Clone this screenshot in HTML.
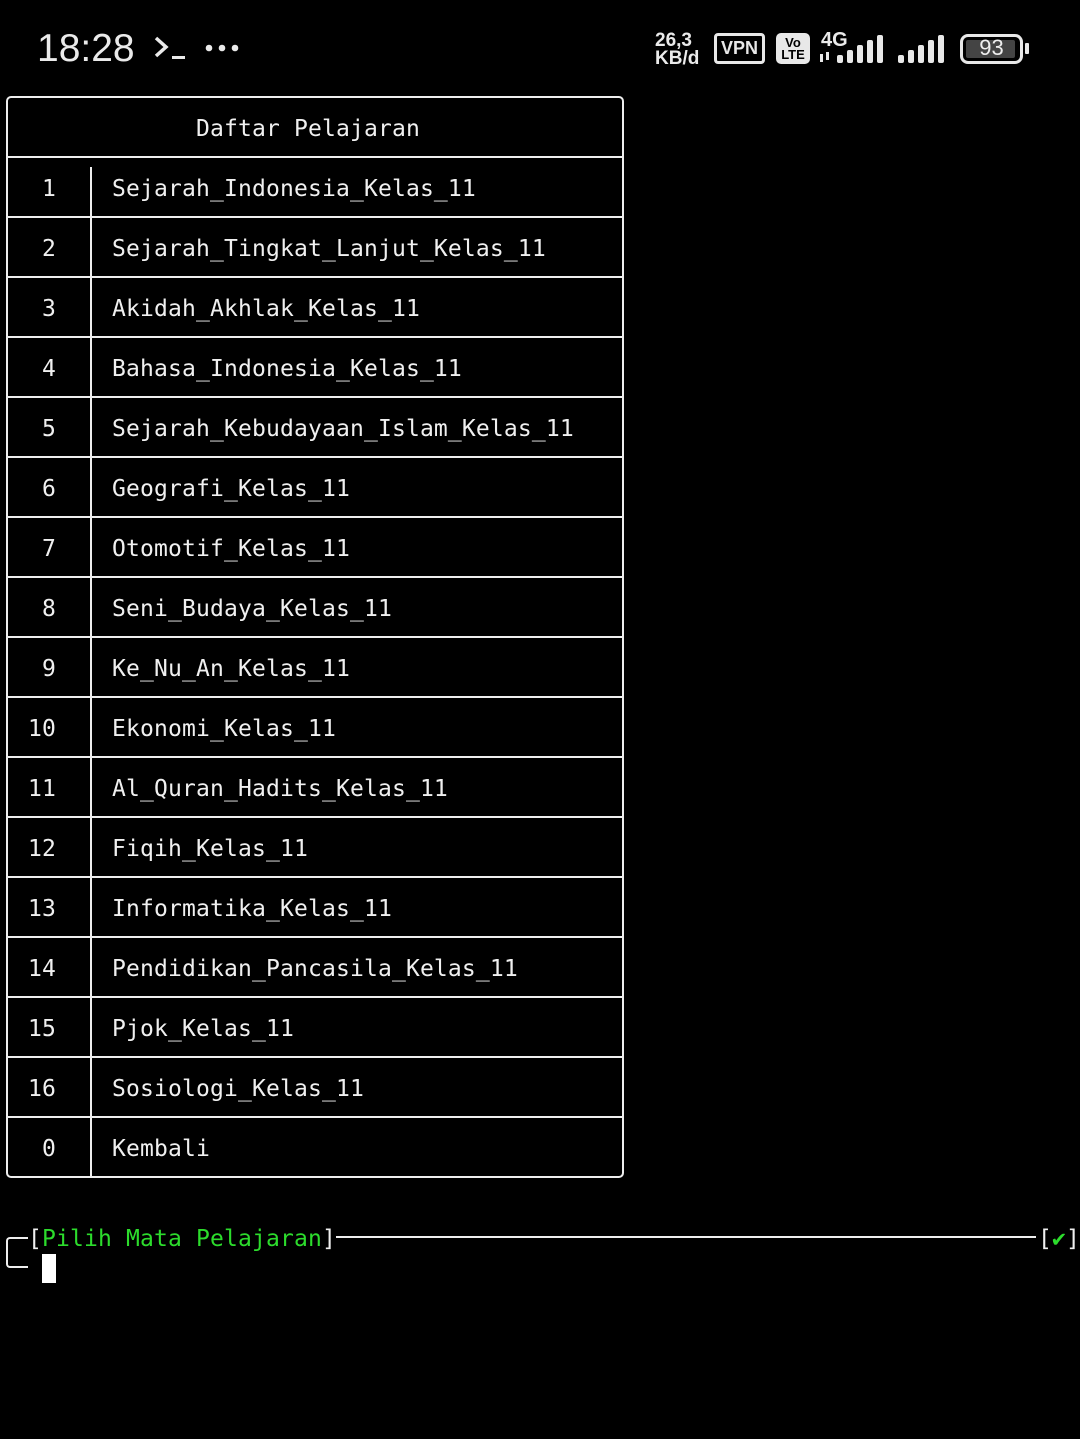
<!DOCTYPE html>
<html><head><meta charset="utf-8"><style>
html,body{margin:0;padding:0;background:#000;width:1080px;height:1439px;overflow:hidden;position:relative}
.m{font-family:"DejaVu Sans Mono","Liberation Mono",monospace;font-size:23px;letter-spacing:0.15px;color:#f0f0f0;position:absolute;white-space:pre;line-height:30px}
.h{position:absolute;background:#eee;height:2px;left:7px;width:616px}
.v{position:absolute;background:#eee;width:2px}
.sb{position:absolute;font-family:"Liberation Sans",sans-serif;color:#eaeaea}
</style></head><body>
<div class="sb" style="left:37px;top:26px;font-size:39px;line-height:46px">18:28</div>
<svg style="position:absolute;left:152px;top:34px" width="40" height="30"><path d="M4 4 L14 13 L4 22" stroke="#eaeaea" stroke-width="3.5" fill="none"/><rect x="20" y="22" width="13" height="3" fill="#eaeaea"/></svg>
<svg style="position:absolute;left:203px;top:42px" width="40" height="12"><circle cx="6" cy="6" r="3.3" fill="#eaeaea"/><circle cx="19" cy="6" r="3.3" fill="#eaeaea"/><circle cx="32" cy="6" r="3.3" fill="#eaeaea"/></svg>
<div class="sb" style="left:655px;top:32px;font-size:19px;font-weight:bold;line-height:18px">26,3<br>KB/d</div>
<div style="position:absolute;left:714px;top:33px;width:51px;height:31px;border:3px solid #e8e8e8;border-radius:4px;box-sizing:border-box;color:#e8e8e8;font:bold 18px 'Liberation Sans',sans-serif;text-align:center;line-height:25px">VPN</div>
<div style="position:absolute;left:776px;top:33px;width:34px;height:31px;background:#e8e8e8;border-radius:5px;color:#000;font:bold 13px 'Liberation Sans',sans-serif;text-align:center;line-height:12px;padding-top:4px;box-sizing:border-box">Vo<br>LTE</div>
<div class="sb" style="left:821px;top:29px;font-size:20px;font-weight:bold">4G</div>
<svg style="position:absolute;left:818px;top:34px" width="130" height="32">
<g fill="#e8e8e8">
<rect x="2" y="20" width="3" height="8"/><rect x="8" y="18" width="3" height="8"/>
<rect x="19" y="21" width="6" height="8" rx="2"/><rect x="29" y="16" width="6" height="13" rx="2"/><rect x="39" y="11" width="6" height="18" rx="2"/><rect x="49" y="6" width="6" height="23" rx="2"/><rect x="59" y="1" width="6" height="28" rx="2"/>
<rect x="80" y="21" width="6" height="8" rx="2"/><rect x="90" y="16" width="6" height="13" rx="2"/><rect x="100" y="11" width="6" height="18" rx="2"/><rect x="110" y="6" width="6" height="23" rx="2"/><rect x="120" y="1" width="6" height="28" rx="2"/>
</g></svg>
<div style="position:absolute;left:960px;top:34px;width:63px;height:30px;border:3px solid #e8e8e8;border-radius:8px;box-sizing:border-box"><div style="position:absolute;left:3px;top:3px;width:49px;height:18px;background:#444;border-radius:2px"></div><div style="position:absolute;left:0;top:-2px;width:57px;text-align:center;color:#eee;font:22px 'Liberation Sans',sans-serif;line-height:26px">93</div></div>
<div style="position:absolute;left:1025px;top:43px;width:4px;height:11px;background:#e8e8e8;border-radius:1px"></div>

<div style="position:absolute;left:6px;top:96px;width:618px;height:1082px;border:2px solid #eee;border-radius:5px;box-sizing:border-box"></div>
<div class="m" style="left:196px;top:114px">Daftar Pelajaran</div>
<div id="rows"></div>
<script>
var items=["Sejarah_Indonesia_Kelas_11","Sejarah_Tingkat_Lanjut_Kelas_11","Akidah_Akhlak_Kelas_11","Bahasa_Indonesia_Kelas_11","Sejarah_Kebudayaan_Islam_Kelas_11","Geografi_Kelas_11","Otomotif_Kelas_11","Seni_Budaya_Kelas_11","Ke_Nu_An_Kelas_11","Ekonomi_Kelas_11","Al_Quran_Hadits_Kelas_11","Fiqih_Kelas_11","Informatika_Kelas_11","Pendidikan_Pancasila_Kelas_11","Pjok_Kelas_11","Sosiologi_Kelas_11","Kembali"];
var h="";
for(var i=0;i<17;i++){var t=156+60*i;
h+='<div class="h" style="top:'+t+'px"></div>';
var n=i<16?String(i+1):"0";
var nx=n.length==1?42:28;
h+='<div class="m" style="left:'+nx+'px;top:'+(t+18)+'px">'+n+'</div>';
h+='<div class="m" style="left:112px;top:'+(t+18)+'px">'+items[i]+'</div>';}
h+='<div class="v" style="left:90px;top:167px;height:1010px"></div>';
document.getElementById("rows").innerHTML=h;
</script>

<div style="position:absolute;left:6px;top:1237px;width:22px;height:31px;border:2px solid #eee;border-right:none;border-radius:4px 0 0 4px;box-sizing:border-box"></div>
<div class="m" style="left:28px;top:1224px">[<span style="color:#2cdc2c">Pilih Mata Pelajaran</span>]</div>
<div style="position:absolute;left:336px;top:1236px;width:700px;height:2px;background:#eee"></div>
<div class="m" style="left:1038px;top:1224px">[<span style="color:#2cdc2c">✔</span>]</div>
<div style="position:absolute;left:42px;top:1254px;width:14px;height:29px;background:#fff"></div>
</body></html>
